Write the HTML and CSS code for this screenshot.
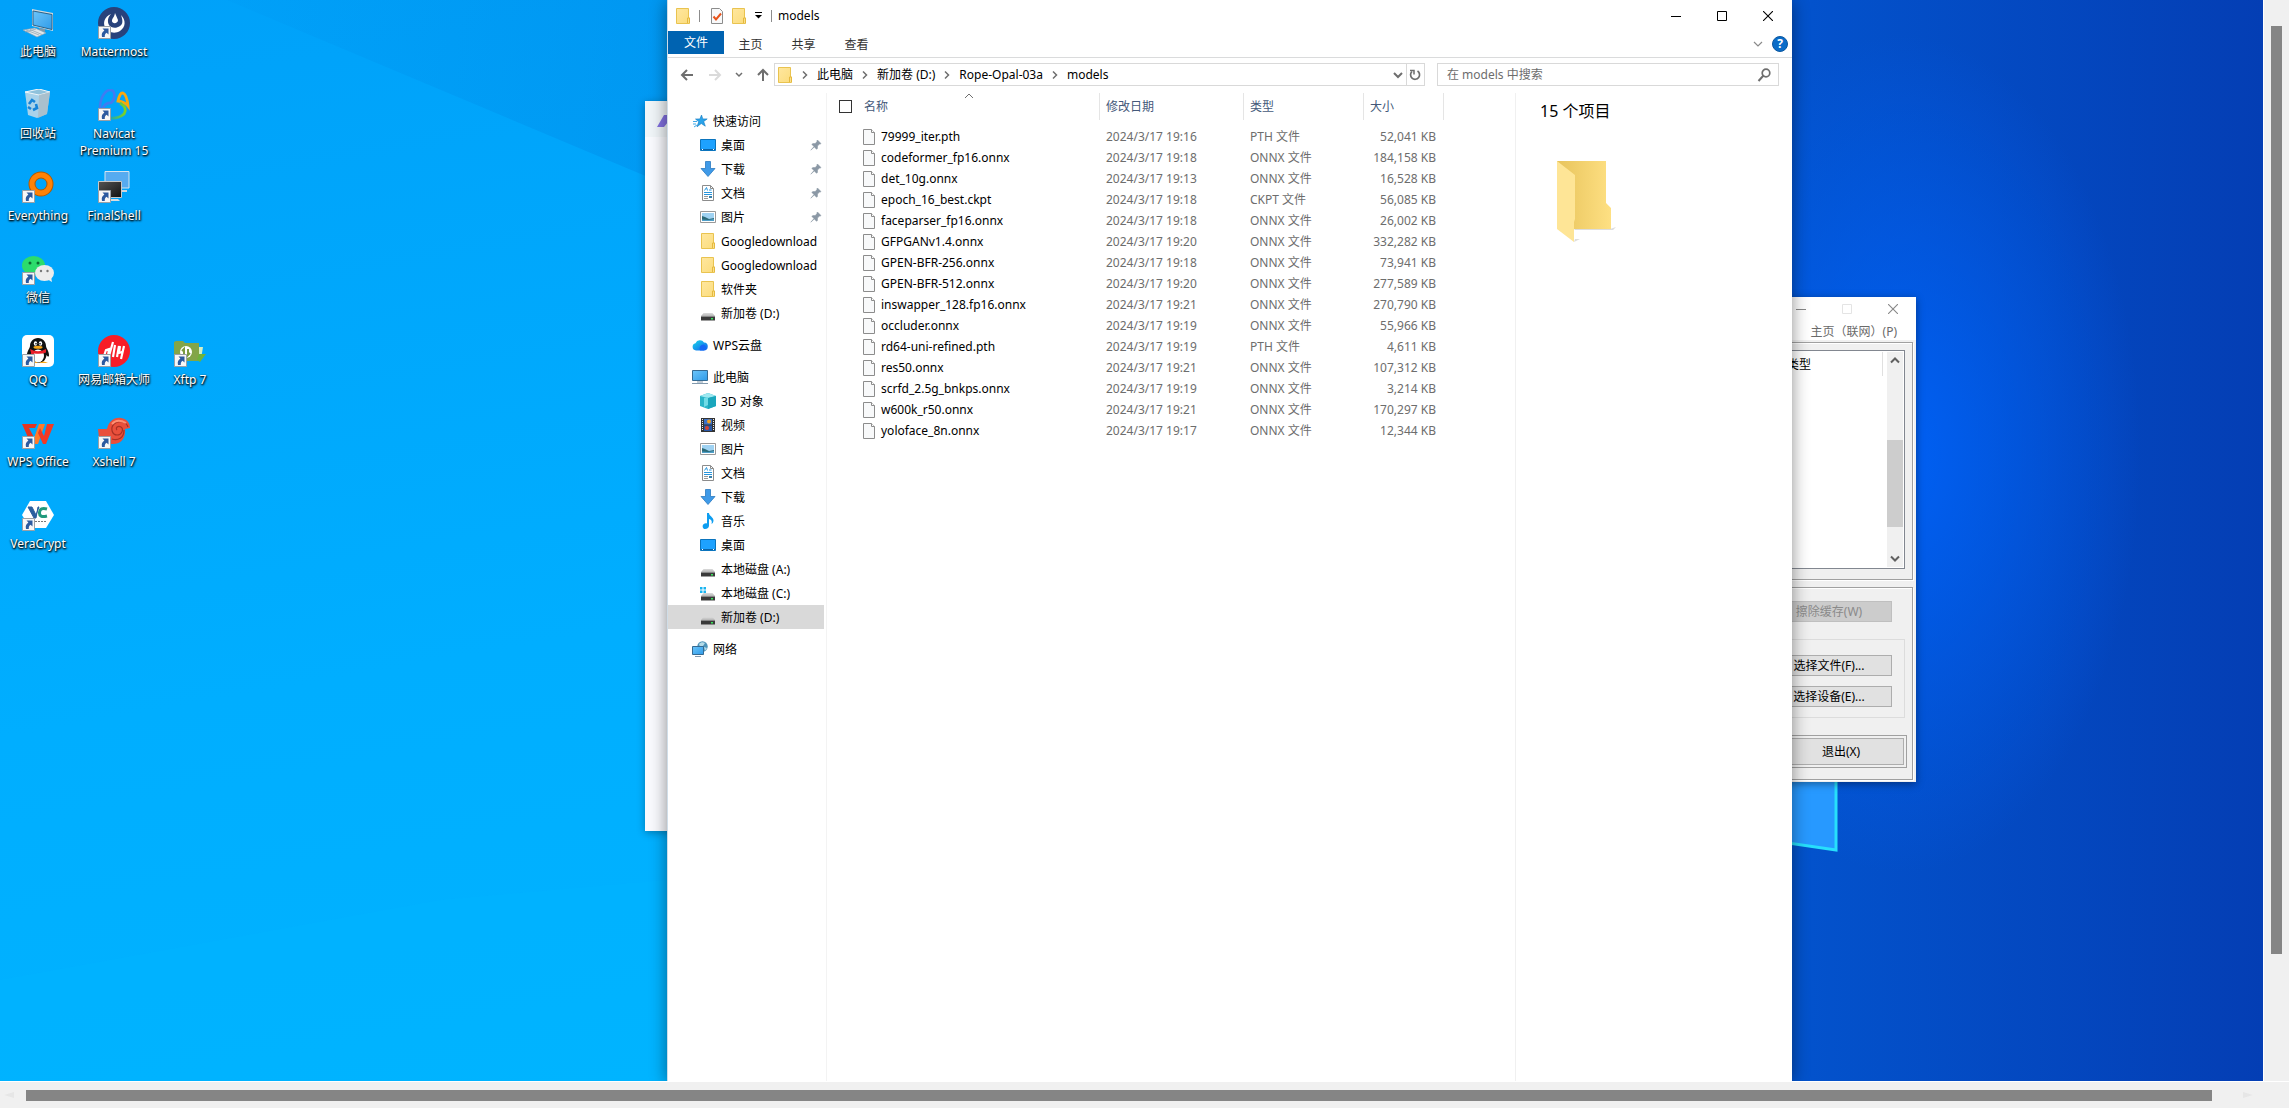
FILE: index.html
```html
<!DOCTYPE html>
<html lang="zh-CN">
<head>
  <meta charset="UTF-8">
  <meta name="viewport" content="width=device-width, initial-scale=1.0">
  <title>models</title>
  <link rel="stylesheet" href="styles.css">
</head>
<body>
  <!-- shared icons -->
  <svg class="sprite" aria-hidden="true">
    <defs>
      <linearGradient id="gFolder" x1="0" y1="0" x2="1" y2="1"><stop offset="0" stop-color="#ffe79f"/><stop offset="1" stop-color="#fbdc7c"/></linearGradient>
      <linearGradient id="gScreen" x1="0" y1="0" x2="1" y2="1"><stop offset="0" stop-color="#6cc5fa"/><stop offset="1" stop-color="#2f9be8"/></linearGradient>
      <linearGradient id="gDrive" x1="0" y1="0" x2="0" y2="1"><stop offset="0" stop-color="#dcdcdc"/><stop offset="1" stop-color="#b4b4b4"/></linearGradient>
      <linearGradient id="gDark" x1="0" y1="0" x2="1" y2="1"><stop offset="0" stop-color="#555"/><stop offset="1" stop-color="#111"/></linearGradient>
      <linearGradient id="gCloud" x1="0" y1="0" x2="1" y2="1"><stop offset="0" stop-color="#1ad8e8"/><stop offset="1" stop-color="#1260f0"/></linearGradient>
      <linearGradient id="gNavi" x1="0" y1="0" x2="1" y2="0"><stop offset="0" stop-color="#19a8b8"/><stop offset="1" stop-color="#7ed320"/></linearGradient>
      <linearGradient id="gBig" x1="0" y1="0" x2="1" y2="0"><stop offset="0" stop-color="#e8c45c"/><stop offset="1" stop-color="#fee083"/></linearGradient>
      <linearGradient id="gBeam" x1="0" y1="0" x2="1" y2="0"><stop offset="0" stop-color="#0074d8" stop-opacity=".04"/><stop offset="1" stop-color="#0074d8" stop-opacity=".25"/></linearGradient>
    </defs>
    <symbol id="i-folder" viewBox="0 0 16 16"><path d="M1.500.5h12v9.500h1v5.500h-13z" fill="url(#gFolder)" stroke="#e9c34f"/><path d="M12.500 15v-5h2v5" fill="#fbe08a" stroke="#e5b93f"/></symbol>
    <symbol id="i-file" viewBox="0 0 12 16"><path d="M.5.5h8l3 3v12H.5z" fill="#f8f9fa" stroke="#8c8c8c"/><path d="M8.500.5v3h3" fill="#fff" stroke="#8c8c8c"/></symbol>
    <symbol id="i-check" viewBox="0 0 12 16"><path d="M.5.5h8l3 3v12H.5z" fill="#f8f9fa" stroke="#8c8c8c"/><path d="M2.500 8.500l2.500 3 5-6" fill="none" stroke="#e8541c" stroke-width="2"/></symbol>
    <symbol id="i-chev-r" viewBox="0 0 16 16"><path d="M6 4.500l3.500 3.500L6 11.500" fill="none" stroke="#6e6e6e" stroke-width="1.500"/></symbol>
    <symbol id="i-chev-d" viewBox="0 0 16 16"><path d="M4 6l4 4 4-4" fill="none" stroke="currentColor" stroke-width="2"/></symbol>
    <symbol id="i-chev-u" viewBox="0 0 16 16"><path d="M4 10l4-4 4 4" fill="none" stroke="currentColor" stroke-width="2"/></symbol>
    <symbol id="i-star" viewBox="0 0 16 16"><path d="M9.500 2l1.300 3.900h4.400l-3.500 2.600 1.600 4.700-4-2.700-4.300 3.300 1.700-5L3.500 6l4.400-.1z" fill="#29a3ea" stroke="#1379c0" stroke-width=".6"/><path d="M1 8.500h4M1 11h3M2 14l3-2" stroke="#3fa9e8"/></symbol>
    <symbol id="i-desktop" viewBox="0 0 16 16"><path d="M.5 2.500h15v11H.5z" fill="#1ea2ff" stroke="#0b74bd"/><path d="M1 12h14v1H1z" fill="#0b64a8"/><path d="M2 12h1v1H2zM13 12h1v1h-1z" fill="#fff"/></symbol>
    <symbol id="i-down" viewBox="0 0 16 16"><path d="M5.500.5h5v7h4.500L8 15.500 1 7.500h4.500z" fill="#3f9ae8" stroke="#2b7ac0" stroke-width=".8"/></symbol>
    <symbol id="i-doc" viewBox="0 0 16 16"><path d="M2.500.5h8l3 3v12h-11z" fill="#fff" stroke="#8c8c8c"/><path d="M10.500.5v3h3" fill="none" stroke="#8c8c8c"/><path d="M4.500 5.500l2-3 1 3M9 5h2.500M4 7.500h8M4 9.500h8" fill="none" stroke="#2795dd"/><path d="M9 11h3v2H9z" fill="#3a7fa8"/><path d="M4 11.500h4M4 13.500h4" stroke="#999"/></symbol>
    <symbol id="i-pic" viewBox="0 0 16 16"><path d="M.5 2.500h15v11H.5z" fill="#fff" stroke="#999"/><path d="M2 4h12v8H2z" fill="#9fd2f2"/><path d="M2 7l3 1 4 2 5-1v3H2z" fill="#2c6a78"/><path d="M2 10.500l6 .5 6-1v2H2z" fill="#4f9fc8"/></symbol>
    <symbol id="i-drive" viewBox="0 0 16 16"><path d="M3.500 8h9l2.500 3H1z" fill="url(#gDrive)"/><path d="M1 11h14v4.500H1z" fill="#3a3a3a"/><path d="M1 11h14v1H1z" fill="#888"/><path d="M11 13h2v1.500h-2z" fill="#39e35a"/></symbol>
    <symbol id="i-sysdrive" viewBox="0 0 16 16"><path d="M3.500 8h9l2.500 3H1z" fill="url(#gDrive)"/><path d="M1 11h14v4.500H1z" fill="#3a3a3a"/><path d="M1 11h14v1H1z" fill="#888"/><path d="M11 13h2v1.500h-2z" fill="#39e35a"/><path d="M0 2h2.500v2.500H0zM3.500 2H6v2.500H3.500zM0 5.500h2.500V8H0zM3.500 5.500H6V8H3.500z" fill="#18b4f0"/></symbol>
    <symbol id="i-cloud" viewBox="0 0 16 16"><path d="M4 13.500a3.700 3.700 0 0 1-.5-7.300A4.800 4.800 0 0 1 12 5.500a4 4 0 0 1-.5 8z" fill="url(#gCloud)"/><path d="M8 13.500a4 4 0 0 1 4-6 3.200 3.200 0 0 1 0 6z" fill="#1568f5"/></symbol>
    <symbol id="i-pc" viewBox="0 0 16 16"><path d="M.5 1.500h15v10H.5z" fill="url(#gScreen)" stroke="#356a92"/><path d="M5 13h6M0 14.500h16" stroke="#8299ad"/></symbol>
    <symbol id="i-cube" viewBox="0 0 16 16"><path d="M0 3l8-3 8 3v10l-8 3-8-3z" fill="#2ab5c8"/><path d="M0 3l8-3 8 3-8 2z" fill="#9de8f0"/><path d="M4 5l4-1v8l-4 2z" fill="#6fdbe6"/><path d="M8 5l8-2v10l-8 3z" fill="#1aa6bc"/></symbol>
    <symbol id="i-video" viewBox="0 0 16 16"><path d="M1 1h14v14H1z" fill="#333"/><path d="M4 2h8v5.500H4z" fill="#3c72c8"/><path d="M4 8.500h8V14H4z" fill="#2858a8"/><circle cx="9" cy="4.500" r="2" fill="#f0a020"/><circle cx="7" cy="11" r="2" fill="#d84430"/><path d="M2.500 2v12M13.500 2v12" stroke="#eee" stroke-dasharray="1 1"/></symbol>
    <symbol id="i-music" viewBox="0 0 16 16"><path d="M7 0h2c0 3 4.500 4 4.500 7.500 0 1.500-1 3-2 3.500 1-3-.5-4.500-2.500-5v6.500c0 2-1.500 3.500-4 3.500S2 12.500 3.500 11.200C4.500 10.300 6 10.200 7 10.500z" fill="#0d9df0"/></symbol>
    <symbol id="i-net" viewBox="0 0 16 16"><circle cx="10.500" cy="5.500" r="5.200" fill="#4d93b8"/><path d="M7 3c2-2 4-2 6-1l-2 3-3 1zM12 6l3 1-2 3z" fill="#b5dbe8"/><path d="M.5 5.500h11v8H.5z" fill="url(#gScreen)" stroke="#356a92"/><path d="M3 15.500h6" stroke="#8299ad"/></symbol>
    <symbol id="i-pin" viewBox="0 0 12 12"><path d="M7.500 1l3.500 3.500-1 .8-.5-.2L7.500 7v2.500l-1 .8L4.300 8 .8 11.200 4 7.500 1.800 5.500l.9-.9h2.500L7 2.600 6.700 2z" fill="#8b98a5" stroke="#8b98a5" stroke-width=".5"/></symbol>
    <symbol id="i-shortcut" viewBox="0 0 13 13"><path d="M.5.5h12v12H.5z" fill="#f7f7f7" stroke="#9aa0a6"/><path d="M4.500 2.500h6v6L8.600 6.700c-1.500 1-2 2.300-1.800 4.300H4c-.8-3 .3-5 2.400-6.400z" fill="#2c5aa0"/></symbol>
    <symbol id="i-min" viewBox="0 0 10 10"><path d="M0 5.500h10" stroke="currentColor"/></symbol>
    <symbol id="i-max" viewBox="0 0 10 10"><path d="M.5.5h9v9h-9z" fill="none" stroke="currentColor"/></symbol>
    <symbol id="i-close" viewBox="0 0 10 10"><path d="M0 0l10 10M10 0L0 10" stroke="currentColor" stroke-width="1.100"/></symbol>
  </svg>

  <main class="desktop">
    <svg class="beams" viewBox="0 0 1000 1081" preserveAspectRatio="none" aria-hidden="true">
      <path d="M340 0L1000 185V0z" fill="url(#gBeam)"/>
      <path d="M0 980L660 900l340-20v201H0z" fill="#00b9ff" opacity=".25"/>
    </svg>
    <svg class="win-logo" viewBox="0 0 138 88" aria-hidden="true">
      <path d="M0 0h135v84L0 64z" fill="#2799ff" stroke="#27dffc" stroke-width="3"/>
    </svg>

    <div class="shortcuts">
      <a class="shortcut" href="#">
        <svg class="pic" viewBox="0 0 32 32"><path d="M10 2l21 4v18l-21-5z" fill="#d2d8dc"/><path d="M11 4l19 3.500v15L11 18z" fill="url(#gScreen)" stroke="#2a648c"/><path d="M17 21l6 1v3l-5-1z" fill="#7f99aa"/><path d="M1 23l12-2 11 5-9 4z" fill="#dfe6ea" stroke="#8fa0ac" stroke-width=".6"/><path d="M4 23l13 5M8 22.500l12 5M3 25l11-3" stroke="#8fa0ac" stroke-width=".7"/></svg>
        <span>此电脑</span>
      </a>
      <a class="shortcut" href="#">
        <svg class="pic" viewBox="0 0 32 32"><path d="M3 3l14-3 11 3-3 22-10 4-9-3z" fill="#c5dbe6" opacity=".85"/><path d="M3 3l14-3 11 3-11 3z" fill="#8fc2dc" stroke="#eef6fa"/><path d="M17 6l11-3-3 22-9 4z" fill="#a9bcc6" opacity=".8"/><path d="M7 15l3-4 3 2M14 15l1 4-4 2M9 20l-3-2" fill="none" stroke="#1583d8" stroke-width="2.600"/></svg>
        <span>回收站</span>
      </a>
      <a class="shortcut" href="#">
        <svg class="pic" viewBox="0 0 32 32"><circle cx="19" cy="13" r="9" fill="none" stroke="#b35a00" stroke-width="7"/><circle cx="19" cy="13" r="9" fill="none" stroke="#ff8206" stroke-width="5"/></svg>
        <svg class="arrow"><use href="#i-shortcut"/></svg>
        <span>Everything</span>
      </a>
      <a class="shortcut" href="#">
        <svg class="pic" viewBox="0 0 32 32"><ellipse cx="11.500" cy="12.500" rx="11.500" ry="9.500" fill="#2cdc6c"/><circle cx="8" cy="10" r="1.500" fill="#0b6b33"/><circle cx="16" cy="10" r="1.500" fill="#0b6b33"/><ellipse cx="22.500" cy="20" rx="9.500" ry="8" fill="#ececec"/><path d="M25 26l5 3-1-5z" fill="#ececec"/><circle cx="19" cy="18" r="1.200" fill="#777"/><circle cx="25.500" cy="18" r="1.200" fill="#777"/></svg>
        <svg class="arrow"><use href="#i-shortcut"/></svg>
        <span>微信</span>
      </a>
      <a class="shortcut" href="#">
        <svg class="pic" viewBox="0 0 32 32"><rect width="32" height="32" rx="5" fill="#fff"/><path d="M16 3c-5 0-8 4-8 8 0 2-3 5-3 9 0 2 1 2 2.500 0C8 25 11 28 16 28s8-3 8.500-8c1.500 2 2.500 2 2.500 0 0-4-3-7-3-9 0-4-3-8-8-8z" fill="#111"/><ellipse cx="16" cy="21" rx="6" ry="6.500" fill="#fff"/><path d="M8 14q8 4.500 16 0v3.500q-4 2-12 1v4H9v-5z" fill="#e81e28"/><ellipse cx="13.500" cy="8.500" rx="1.700" ry="2.300" fill="#fff"/><ellipse cx="18.500" cy="8.500" rx="1.700" ry="2.300" fill="#fff"/><circle cx="14" cy="8.700" r=".8"/><circle cx="18" cy="8.700" r=".8"/><ellipse cx="16" cy="12.200" rx="4.500" ry="1.500" fill="#f8a818"/><path d="M9 28q4-3 7 0zM17 28q4-3 9 0z" fill="#f8a818"/></svg>
        <svg class="arrow"><use href="#i-shortcut"/></svg>
        <span>QQ</span>
      </a>
      <a class="shortcut" href="#">
        <svg class="pic" viewBox="0 0 32 32"><path d="M0 7h15l-2 4H7l7 13-2 3H9z" fill="#e23422"/><path d="M17 7h6l-7 20h-6z" fill="#ff7a2a"/><path d="M25 7h7l-8 20h-3L16 16l2-5 4 8z" fill="#f23a26"/></svg>
        <svg class="arrow"><use href="#i-shortcut"/></svg>
        <span>WPS Office</span>
      </a>
      <a class="shortcut" href="#">
        <svg class="pic" viewBox="0 0 32 32"><path d="M8 2h16l8 14-8 13H8L0 16z" fill="#fff"/><path d="M6 8h4l4 8 3-8h-1l-2 11h-2z" fill="#2b5f9e" stroke="#2b5f9e"/><path d="M25 10q-7-2-7.500 3.500T25 17" fill="none" stroke="#20997c" stroke-width="3"/><path d="M13 22.500h12" stroke="#777" stroke-dasharray="2 1"/></svg>
        <svg class="arrow"><use href="#i-shortcut"/></svg>
        <span>VeraCrypt</span>
      </a>
      <a class="shortcut col-2" href="#">
        <svg class="pic" viewBox="0 0 32 32"><circle cx="16" cy="16" r="16" fill="#28427b"/><path d="M13 7c-7 3-8 9-6 13 3 6 10 7 15 4 6-4 6-11 1-16 2 6 2 9-1 11-4 3-9 2-11-1-2-4-1-8 2-11z" fill="#fff"/><path d="M17 6l3 7c0 4-6 4-6 1 0-3 2-3 3-8z" fill="#fff"/></svg>
        <svg class="arrow"><use href="#i-shortcut"/></svg>
        <span>Mattermost</span>
      </a>
      <a class="shortcut" href="#">
        <svg class="pic" viewBox="0 0 32 32"><path d="M2 19C2 8 8 0 13 1s4 10 0 13q-6-1-9 7" fill="none" stroke="#3f7cf2" stroke-width="2.600"/><path d="M20 12q2-9 5-8 4 2 5 13-3-4-10-5z" fill="none" stroke="#f8a80d" stroke-width="2.800"/><path d="M22 14q8 5 4 11-6 5-14 4" fill="none" stroke="url(#gNavi)" stroke-width="2.800"/></svg>
        <svg class="arrow"><use href="#i-shortcut"/></svg>
        <span>Navicat Premium 15</span>
      </a>
      <a class="shortcut" href="#">
        <svg class="pic" viewBox="0 0 32 32"><path d="M7 .5h24v16.500H7z" fill="#56abf0" stroke="#d5e4ee"/><path d="M22 19h7v2h-7z" fill="#cbd5dc"/><path d="M.5 10.500h23v16H.5z" fill="url(#gDark)" stroke="#c8c8c8"/><path d="M13 28h7l2 2H12z" fill="#d8dde0"/></svg>
        <svg class="arrow"><use href="#i-shortcut"/></svg>
        <span>FinalShell</span>
      </a>
      <a class="shortcut row-5" href="#">
        <svg class="pic" viewBox="0 0 32 32"><circle cx="16" cy="16" r="16" fill="#f71d27"/><path d="M6 21l2-6 3-1-1 7zM11 21l4-14M15 22l2-12M19 22l2-11M22 11l-1 7 3-1M26 11l-3 13" fill="none" stroke="#fff" stroke-width="2.200"/></svg>
        <svg class="arrow"><use href="#i-shortcut"/></svg>
        <span>网易邮箱大师</span>
      </a>
      <a class="shortcut row-6" href="#">
        <svg class="pic" viewBox="0 0 32 32"><path d="M0 12h9c2-8 7-12 14-11 6 1 9 5 9 10l-5 1c1 9-4 15-12 15H9l-8-6z" fill="#e9503c"/><path d="M30 10C28 4 20 3 16 7s-2 11 3 11 7-6 4-8-6 1-4 3M26 13c0 8-6 11-12 9" fill="none" stroke="#a83024" stroke-width="1.200"/><path d="M14 7q5-6 14-1" fill="none" stroke="#ff8f74" stroke-width="2"/></svg>
        <svg class="arrow"><use href="#i-shortcut"/></svg>
        <span>Xshell 7</span>
      </a>
      <a class="shortcut col-3" href="#">
        <svg class="pic" viewBox="0 0 32 32"><path d="M0 7l2-1h7l2 2h14v18H0z" fill="#83a548"/><path d="M25 12h4l-2 12h-2z" fill="#d5f0c5"/><path d="M25 19h7l-6 8-3-2z" fill="#6fb23b"/><circle cx="12" cy="17" r="6" fill="#fff"/><path d="M10 20v-6l-2 2M14 14v6l2-2" fill="none" stroke="#7a9b40" stroke-width="2"/></svg>
        <svg class="arrow"><use href="#i-shortcut"/></svg>
        <span>Xftp 7</span>
      </a>
    </div>

    <div class="window side-window">
      <div class="side-head">
        <svg class="side-logo" viewBox="0 0 20 12"><path d="M7 0h8l5 12h-7l-2-5-4 5H0z" fill="#8271e0"/></svg>
      </div>
    </div>

    <section class="window crypt">
      <div class="crypt-title">
        <svg class="c-min"><use href="#i-min"/></svg>
        <svg class="c-max"><use href="#i-max"/></svg>
        <svg class="c-close"><use href="#i-close"/></svg>
      </div>
      <div class="crypt-menu">主页（联网）(P)</div>
      <div class="crypt-body">
        <div class="panel">
          <div class="volumes">
            <div class="volumes-head">类型</div>
            <div class="mini-scroll">
              <svg><use href="#i-chev-u"/></svg>
              <div class="mini-track"><div class="mini-thumb"></div></div>
              <svg><use href="#i-chev-d"/></svg>
            </div>
          </div>
        </div>
        <div class="panel actions">
          <button class="btn" disabled>擦除缓存(W)</button>
          <div class="pickers">
            <button class="btn">选择文件(F)...</button>
            <button class="btn">选择设备(E)...</button>
          </div>
          <div class="exit"><button class="btn">退出(X)</button></div>
        </div>
      </div>
    </section>

    <section class="window explorer">
      <header class="titlebar">
        <svg class="i16"><use href="#i-folder"/></svg>
        <i class="bar"></i>
        <svg class="i12"><use href="#i-check"/></svg>
        <svg class="i16"><use href="#i-folder"/></svg>
        <svg class="quick" viewBox="0 0 8 8"><path d="M0 .5h7" stroke="#000"/><path d="M0 3h7L3.500 6.500z"/></svg>
        <i class="bar"></i>
        <span class="title">models</span>
        <button class="ctl" aria-label="最小化"><svg><use href="#i-min"/></svg></button>
        <button class="ctl" aria-label="最大化"><svg><use href="#i-max"/></svg></button>
        <button class="ctl" aria-label="关闭"><svg><use href="#i-close"/></svg></button>
      </header>

      <nav class="ribbon">
        <button class="tab tab-file">文件</button>
        <button class="tab">主页</button>
        <button class="tab">共享</button>
        <button class="tab">查看</button>
        <svg class="expand" viewBox="0 0 16 16"><path d="M4 6l4 4 4-4" fill="none" stroke="#8a8a8a" stroke-width="1.200"/></svg>
        <button class="help" aria-label="帮助">?</button>
      </nav>

      <div class="address-row">
        <div class="arrows">
          <svg viewBox="0 0 16 16"><path d="M14 8H3M8 3L3 8l5 5" fill="none" stroke="#6e6e6e" stroke-width="2"/></svg>
          <svg viewBox="0 0 16 16"><path d="M2 8h11M8 3l5 5-5 5" fill="none" stroke="#dadada" stroke-width="2"/></svg>
          <svg class="recent" viewBox="0 0 8 16"><path d="M1 6l3 3 3-3" fill="none" stroke="#6e6e6e" stroke-width="1.500"/></svg>
          <svg viewBox="0 0 16 16"><path d="M8 14V3M3 8l5-5 5 5" fill="none" stroke="#6e6e6e" stroke-width="2"/></svg>
        </div>
        <div class="address">
          <svg class="i16"><use href="#i-folder"/></svg>
          <svg class="sep"><use href="#i-chev-r"/></svg>
          <a href="#">此电脑</a>
          <svg class="sep"><use href="#i-chev-r"/></svg>
          <a href="#">新加卷 (D:)</a>
          <svg class="sep"><use href="#i-chev-r"/></svg>
          <a href="#">Rope-Opal-03a</a>
          <svg class="sep"><use href="#i-chev-r"/></svg>
          <a href="#">models</a>
          <svg class="drop"><use href="#i-chev-d"/></svg>
          <button class="refresh" aria-label="刷新"><svg viewBox="0 0 16 16"><path d="M10.500 4A4.500 4.500 0 1 1 5 4.500" fill="none" stroke="#6e6e6e" stroke-width="1.700"/><path d="M3 3.500h4v4" fill="none" stroke="#6e6e6e" stroke-width="1.500"/></svg></button>
        </div>
        <div class="search">
          <input type="text" placeholder="在 models 中搜索" aria-label="搜索">
          <svg viewBox="0 0 16 16"><circle cx="10" cy="6" r="3.800" fill="none" stroke="#6e6e6e" stroke-width="1.700"/><path d="M7.500 8.500L2.500 14" stroke="#6e6e6e" stroke-width="2"/></svg>
        </div>
      </div>

      <div class="content">
        <nav class="tree">
          <div class="group">
            <a class="root" href="#"><svg><use href="#i-star"/></svg>快速访问</a>
            <a href="#"><svg><use href="#i-desktop"/></svg>桌面<svg class="pin"><use href="#i-pin"/></svg></a>
            <a href="#"><svg><use href="#i-down"/></svg>下载<svg class="pin"><use href="#i-pin"/></svg></a>
            <a href="#"><svg><use href="#i-doc"/></svg>文档<svg class="pin"><use href="#i-pin"/></svg></a>
            <a href="#"><svg><use href="#i-pic"/></svg>图片<svg class="pin"><use href="#i-pin"/></svg></a>
            <a href="#"><svg><use href="#i-folder"/></svg>Googledownload</a>
            <a href="#"><svg><use href="#i-folder"/></svg>Googledownload</a>
            <a href="#"><svg><use href="#i-folder"/></svg>软件夹</a>
            <a href="#"><svg><use href="#i-drive"/></svg>新加卷 (D:)</a>
          </div>
          <div class="group">
            <a class="root" href="#"><svg><use href="#i-cloud"/></svg>WPS云盘</a>
          </div>
          <div class="group">
            <a class="root" href="#"><svg><use href="#i-pc"/></svg>此电脑</a>
            <a href="#"><svg><use href="#i-cube"/></svg>3D 对象</a>
            <a href="#"><svg><use href="#i-video"/></svg>视频</a>
            <a href="#"><svg><use href="#i-pic"/></svg>图片</a>
            <a href="#"><svg><use href="#i-doc"/></svg>文档</a>
            <a href="#"><svg><use href="#i-down"/></svg>下载</a>
            <a href="#"><svg><use href="#i-music"/></svg>音乐</a>
            <a href="#"><svg><use href="#i-desktop"/></svg>桌面</a>
            <a href="#"><svg><use href="#i-drive"/></svg>本地磁盘 (A:)</a>
            <a href="#"><svg><use href="#i-sysdrive"/></svg>本地磁盘 (C:)</a>
            <a class="selected" href="#"><svg><use href="#i-drive"/></svg>新加卷 (D:)</a>
          </div>
          <div class="group">
            <a class="root" href="#"><svg><use href="#i-net"/></svg>网络</a>
          </div>
        </nav>

        <div class="files">
          <table>
            <thead>
              <tr>
                <th class="col-name">
                  <div class="name-head">
                    <input type="checkbox" aria-label="全选">名称
                    <svg class="sort" viewBox="0 0 10 6"><path d="M1 5l4-4 4 4" fill="none" stroke="#6e6e6e"/></svg>
                  </div>
                </th>
                <th class="col-date">修改日期</th>
                <th class="col-type">类型</th>
                <th class="col-size">大小</th>
              </tr>
            </thead>
            <tbody>
              <tr><td><svg><use href="#i-file"/></svg>79999_iter.pth</td><td>2024/3/17 19:16</td><td>PTH 文件</td><td>52,041 KB</td></tr>
              <tr><td><svg><use href="#i-file"/></svg>codeformer_fp16.onnx</td><td>2024/3/17 19:18</td><td>ONNX 文件</td><td>184,158 KB</td></tr>
              <tr><td><svg><use href="#i-file"/></svg>det_10g.onnx</td><td>2024/3/17 19:13</td><td>ONNX 文件</td><td>16,528 KB</td></tr>
              <tr><td><svg><use href="#i-file"/></svg>epoch_16_best.ckpt</td><td>2024/3/17 19:18</td><td>CKPT 文件</td><td>56,085 KB</td></tr>
              <tr><td><svg><use href="#i-file"/></svg>faceparser_fp16.onnx</td><td>2024/3/17 19:18</td><td>ONNX 文件</td><td>26,002 KB</td></tr>
              <tr><td><svg><use href="#i-file"/></svg>GFPGANv1.4.onnx</td><td>2024/3/17 19:20</td><td>ONNX 文件</td><td>332,282 KB</td></tr>
              <tr><td><svg><use href="#i-file"/></svg>GPEN-BFR-256.onnx</td><td>2024/3/17 19:18</td><td>ONNX 文件</td><td>73,941 KB</td></tr>
              <tr><td><svg><use href="#i-file"/></svg>GPEN-BFR-512.onnx</td><td>2024/3/17 19:20</td><td>ONNX 文件</td><td>277,589 KB</td></tr>
              <tr><td><svg><use href="#i-file"/></svg>inswapper_128.fp16.onnx</td><td>2024/3/17 19:21</td><td>ONNX 文件</td><td>270,790 KB</td></tr>
              <tr><td><svg><use href="#i-file"/></svg>occluder.onnx</td><td>2024/3/17 19:19</td><td>ONNX 文件</td><td>55,966 KB</td></tr>
              <tr><td><svg><use href="#i-file"/></svg>rd64-uni-refined.pth</td><td>2024/3/17 19:19</td><td>PTH 文件</td><td>4,611 KB</td></tr>
              <tr><td><svg><use href="#i-file"/></svg>res50.onnx</td><td>2024/3/17 19:21</td><td>ONNX 文件</td><td>107,312 KB</td></tr>
              <tr><td><svg><use href="#i-file"/></svg>scrfd_2.5g_bnkps.onnx</td><td>2024/3/17 19:19</td><td>ONNX 文件</td><td>3,214 KB</td></tr>
              <tr><td><svg><use href="#i-file"/></svg>w600k_r50.onnx</td><td>2024/3/17 19:21</td><td>ONNX 文件</td><td>170,297 KB</td></tr>
              <tr><td><svg><use href="#i-file"/></svg>yoloface_8n.onnx</td><td>2024/3/17 19:17</td><td>ONNX 文件</td><td>12,344 KB</td></tr>
            </tbody>
          </table>
        </div>

        <aside class="details">
          <h2>15 个项目</h2>
          <svg class="big-folder" viewBox="0 0 60 82"><path d="M18 68h35l6-2-3 3H17zM17 81l6-3-5 0z" fill="#ddd"/><path d="M0 0h49v42l5 5v21H0z" fill="url(#gBig)"/><path d="M0 0l18 14v44l-1 3v20L0 68z" fill="#fee596"/></svg>
        </aside>
      </div>
    </section>
  </main>

  <div class="vscroll"><div class="vthumb"></div></div>
  <div class="hscroll">
    <svg viewBox="0 0 10 6"><path d="M10 0v6L0 3z" fill="#e6e6e6"/></svg>
    <div class="hthumb"></div>
    <svg viewBox="0 0 10 6"><path d="M0 0v6l10-3z" fill="#e6e6e6"/></svg>
  </div>
</body>
</html>
```

FILE: styles.css
```css
* {
  box-sizing: border-box;
}

body {
  margin: 0;
  height: 100vh;
  display: grid;
  grid-template-columns: 1fr 26px;
  grid-template-rows: 1fr 27px;
  background-color: #f0f0f0;
  font-family: 'Noto Sans', 'Noto Sans CJK SC', sans-serif;
  font-size: 12px;
  line-height: 17px;
  color: #000;
  overflow: hidden;
}

a {
  color: inherit;
  text-decoration: none;
}

button, input {
  font: inherit;
  color: inherit;
}

svg {
  display: block;
  flex: none;
}

.sprite {
  position: absolute;
  width: 0;
  height: 0;
}

/* desktop */
.desktop {
  position: relative;
  overflow: hidden;
  background:
    radial-gradient(ellipse 240px 420px at 84% 42%, #0060f4 0%, rgba(0, 96, 244, 0) 100%),
    linear-gradient(90deg, rgba(4, 62, 180, 0) 30%, #0352cc 80%, #043eb4 100%),
    linear-gradient(170deg, #00a1f9 0%, #00aeff 50%, #00b6ff 100%);
}

.beams {
  position: absolute;
  left: 0;
  top: 0;
  width: 667px;
  height: 100%;
}

.win-logo {
  position: absolute;
  right: 424px;
  top: 766px;
  width: 138px;
  height: 88px;
}

.shortcuts {
  position: relative;
  display: grid;
  grid-template-columns: repeat(3, 76px);
  grid-template-rows: repeat(7, 82px);
  grid-auto-flow: column;
  width: max-content;
  padding-top: 7px;
}

.shortcut {
  position: relative;
  display: flex;
  flex-direction: column;
  align-items: center;
  gap: 4px;
  color: #fff;
  text-align: center;
  text-shadow: 1px 1px 2px #000, 0 1px 2px #000;
}

.shortcut .pic {
  width: 32px;
  height: 32px;
}

.shortcut .arrow {
  position: absolute;
  left: 22px;
  top: 19px;
  width: 13px;
  height: 13px;
}

.col-2 {
  grid-column: 2;
  grid-row: 1;
}

.row-5 {
  grid-column: 2;
  grid-row: 5;
}

.row-6 {
  grid-column: 2;
  grid-row: 6;
}

.col-3 {
  grid-column: 3;
  grid-row: 5;
}

.window {
  position: absolute;
  box-shadow: 0 2px 16px rgba(0, 0, 0, 0.45);
}

/* window peeking out on the left */
.side-window {
  left: 645px;
  top: 101px;
  width: 200px;
  height: 730px;
  background-color: #f9fafe;
  box-shadow: 0 2px 8px rgba(0, 0, 0, 0.3);
}

.side-head {
  height: 36px;
  padding: 14px 12px;
  background-color: #f0f5f8;
}

.side-logo {
  width: 20px;
  height: 12px;
}

/* VeraCrypt */
.crypt {
  right: 347px;
  top: 297px;
  width: 240px;
  height: 485px;
  display: flex;
  flex-direction: column;
  background-color: #fff;
  box-shadow: 0 2px 8px rgba(0, 0, 0, 0.4);
}

.crypt-title {
  display: flex;
  justify-content: flex-end;
  align-items: center;
  gap: 36px;
  height: 24px;
  padding-right: 18px;
}

.crypt-title svg {
  width: 10px;
  height: 10px;
  color: #888;
}

.crypt-title .c-max {
  color: #e4e4e4;
}

.crypt-menu {
  height: 19px;
  padding-right: 19px;
  line-height: 21px;
  text-align: right;
  color: #6a6a6a;
}

.crypt-body {
  flex: 1;
  display: flex;
  flex-direction: column;
  gap: 7px;
  padding: 2px 3px;
  background-color: #f0f0f0;
}

.panel {
  height: 238px;
  padding: 7px;
  border: 1px solid #a0a0a0;
  box-shadow: 1px 1px #fff, inset 1px 1px #fff;
}

.volumes {
  display: flex;
  justify-content: flex-end;
  height: 219px;
  border: 1px solid #828790;
  padding: 1px;
  background-color: #fff;
}

.volumes-head {
  width: 96px;
  height: 24px;
  border-right: 1px solid #e0e0e0;
  line-height: 26px;
  margin-right: 4px;
}

.mini-scroll {
  display: flex;
  flex-direction: column;
  align-items: center;
  width: 16px;
  background-color: #f0f0f0;
  color: #606060;
}

.mini-scroll svg {
  width: 16px;
  height: 17px;
}

.mini-track {
  flex: 1;
  width: 100%;
  padding-top: 71px;
}

.mini-thumb {
  height: 87px;
  background-color: #cdcdcd;
}

.actions {
  flex: 1;
  display: flex;
  flex-direction: column;
  align-items: flex-end;
  padding: 13px 5px 0;
}

.btn {
  width: 126px;
  height: 21px;
  padding: 0;
  border: 1px solid #adadad;
  background-color: #e1e1e1;
  line-height: 17px;
}

.actions > .btn {
  margin-right: 15px;
}

.btn:disabled {
  border-color: #bfbfbf;
  background-color: #ccc;
  color: #8a8a8a;
}

.pickers {
  display: flex;
  flex-direction: column;
  align-items: flex-end;
  gap: 10px;
  width: 160px;
  height: 79px;
  margin: 17px 2px;
  padding: 15px 12px 0;
  border: 1px solid #dcdcdc;
}

.exit {
  padding: 2px;
  border: 1px solid #a0a0a0;
}

.exit .btn {
  display: block;
  height: 27px;
}

/* explorer */
.explorer {
  left: 667px;
  right: 471px;
  top: 0;
  bottom: 0;
  display: flex;
  flex-direction: column;
  border-left: 1px solid #cfdde8;
  background-color: #fff;
}

.i16 {
  width: 16px;
  height: 16px;
}

.i12 {
  width: 12px;
  height: 16px;
}

.titlebar {
  display: flex;
  align-items: center;
  gap: 8px;
  height: 31px;
  padding: 0 1px 0 7px;
}

.titlebar .bar {
  width: 1px;
  height: 12px;
  margin-right: 3px;
  background-color: #8c8c8c;
}

.titlebar .bar + .title {
  margin-left: -5px;
}

.quick {
  width: 8px;
  height: 8px;
}

.title {
  flex: 1;
}

.ctl {
  width: 46px;
  height: 30px;
  padding: 0;
  margin-left: -8px;
  border: none;
  background: none;
  display: flex;
  align-items: center;
  justify-content: center;
}

.ctl svg {
  width: 10px;
  height: 10px;
}

.ribbon {
  display: flex;
  align-items: center;
  height: 27px;
  border-bottom: 1px solid #dadbdc;
  padding-right: 4px;
}

.tab {
  width: 53px;
  height: 26px;
  padding: 0;
  border: none;
  background: none;
  color: #333;
}

.tab-file {
  width: 56px;
  height: 23px;
  align-self: flex-start;
  background-color: #0063b1;
  color: #fff;
}

.expand {
  width: 16px;
  height: 16px;
  margin-left: auto;
  margin-right: 6px;
}

.help {
  width: 16px;
  height: 16px;
  padding: 0;
  border: 1px solid #0a57a0;
  border-radius: 50%;
  background-color: #0a6cc8;
  color: #fff;
  font-weight: bold;
  line-height: 14px;
}

.address-row {
  display: flex;
  align-items: center;
  height: 33px;
  margin-bottom: 2px;
  padding: 0 13px 0 11px;
}

.arrows {
  display: flex;
  align-items: center;
  gap: 12px;
  width: 95px;
}

.arrows svg {
  width: 16px;
  height: 16px;
}

.arrows .recent {
  width: 8px;
}

.address {
  flex: 1;
  display: flex;
  align-items: center;
  height: 23px;
  margin-right: 12px;
  padding-left: 2px;
  border: 1px solid #d9d9d9;
}

.address a {
  white-space: nowrap;
}

.sep {
  width: 24px;
  height: 16px;
}

.drop {
  width: 16px;
  height: 16px;
  margin-left: auto;
  color: #6e6e6e;
}

.refresh {
  width: 18px;
  height: 21px;
  padding: 0;
  border: none;
  border-left: 1px solid #d9d9d9;
  background: none;
}

.refresh svg {
  width: 16px;
  height: 16px;
}

.search {
  display: flex;
  align-items: center;
  width: 342px;
  height: 23px;
  padding: 0 6px 0 9px;
  border: 1px solid #d9d9d9;
}

.search input {
  flex: 1;
  padding: 0;
  border: none;
  outline: none;
}

.search input::placeholder {
  color: #6d6d6d;
}

.search svg {
  width: 16px;
  height: 16px;
}

.content {
  flex: 1;
  display: flex;
}

.tree {
  width: 159px;
  padding: 16px 2px 0 0;
  border-right: 1px solid #f3f3f3;
}

.group {
  margin-bottom: 8px;
}

.tree a {
  display: flex;
  align-items: center;
  gap: 5px;
  height: 24px;
  padding-left: 32px;
  white-space: nowrap;
}

.tree a.root {
  padding-left: 24px;
}

.tree a.selected {
  background-color: #d9d9d9;
}

.tree svg {
  width: 16px;
  height: 16px;
}

.tree .pin {
  width: 12px;
  height: 12px;
  margin-left: auto;
  margin-right: 2px;
}

.files {
  flex: 1;
}

table {
  width: 617px;
  table-layout: fixed;
  border-spacing: 0;
}

th {
  height: 27px;
  padding: 0 6px;
  border-right: 1px solid #e5e5e5;
  color: #44597a;
  font-weight: normal;
  text-align: left;
}

.col-name {
  width: 273px;
  padding: 0 0 0 12px;
}

.col-date {
  width: 144px;
}

.col-type {
  width: 120px;
}

.col-size {
  width: 80px;
}

.name-head {
  position: relative;
  display: flex;
  align-items: center;
  gap: 12px;
}

.name-head input {
  appearance: none;
  width: 13px;
  height: 13px;
  margin: 0;
  border: 1px solid #333;
}

.sort {
  position: absolute;
  left: 125px;
  top: -5px;
  width: 10px;
  height: 6px;
}

tbody::before {
  content: '';
  display: block;
  height: 6px;
}

td {
  height: 21px;
  padding: 0 6px;
  color: #6d6d6d;
  white-space: nowrap;
}

td:first-child {
  display: flex;
  align-items: center;
  gap: 6px;
  padding-left: 36px;
  color: #000;
}

td:last-child {
  text-align: right;
  padding-right: 8px;
}

td svg {
  width: 12px;
  height: 16px;
}

.details {
  width: 277px;
  padding: 8px 24px;
  border-left: 1px solid #f0f0f0;
}

.details h2 {
  margin: 0 0 40px;
  font-size: 16px;
  font-weight: normal;
  line-height: 20px;
}

.big-folder {
  width: 60px;
  height: 82px;
  margin-left: 17px;
}

/* viewer scrollbars */
.vscroll {
  border-left: 1px solid #fff;
  padding: 26px 7px 0;
}

.vthumb {
  height: 88%;
  background-color: #858585;
}

.hscroll {
  grid-column: 1 / -1;
  display: flex;
  align-items: center;
  gap: 12px;
  padding: 0 36px 0 4px;
  border-top: 1px solid #fff;
}

.hscroll svg {
  width: 10px;
  height: 6px;
}

.hthumb {
  flex: 1;
  height: 11px;
  margin-right: 19px;
  background-color: #858585;
}
```
